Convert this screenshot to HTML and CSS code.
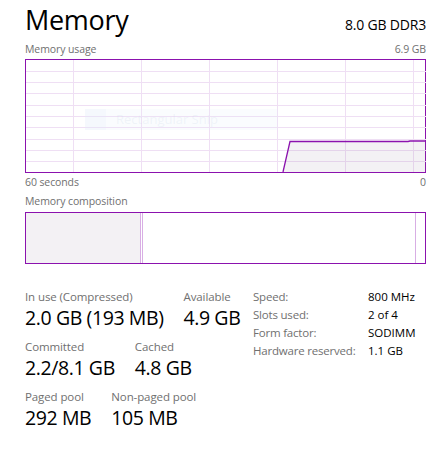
FILE: index.html
```html
<!DOCTYPE html>
<html lang="en">
<head>
  <meta charset="UTF-8">
  <title>Memory</title>
  <link rel="stylesheet" href="styles.css">
</head>
<body>
  <div class="page">
    <div class="head">
      <h1>Memory</h1>
      <div class="spec">8.0 GB DDR3</div>
    </div>
    <div class="caption"><span>Memory usage</span><span>6.9 GB</span></div>
    <div class="graph">
      <svg width="400" height="112" viewBox="0 0 400 112">
        <g stroke="#efdff4" stroke-width="1">
          <line x1="0" y1="11.5" x2="400" y2="11.5"/>
          <line x1="0" y1="22.5" x2="400" y2="22.5"/>
          <line x1="0" y1="33.5" x2="400" y2="33.5"/>
          <line x1="0" y1="45.5" x2="400" y2="45.5"/>
          <line x1="0" y1="56.5" x2="400" y2="56.5"/>
          <line x1="0" y1="67.5" x2="400" y2="67.5"/>
          <line x1="0" y1="79.5" x2="400" y2="79.5"/>
          <line x1="0" y1="90.5" x2="400" y2="90.5"/>
          <line x1="0" y1="101.5" x2="400" y2="101.5"/>
          <line x1="47.5" y1="0" x2="47.5" y2="112"/>
          <line x1="115.5" y1="0" x2="115.5" y2="112"/>
          <line x1="183.5" y1="0" x2="183.5" y2="112"/>
          <line x1="251.5" y1="0" x2="251.5" y2="112"/>
          <line x1="319.5" y1="0" x2="319.5" y2="112"/>
          <line x1="387.5" y1="0" x2="387.5" y2="112"/>
        </g>
        <path d="M257 112 L264 81.5 L400 81.5 L400 112 Z" fill="rgba(120,100,130,0.09)"/>
        <path d="M257 112 L264 81.5 L382 81.5 L384 81 L400 81" fill="none" stroke="#8b12ae" stroke-width="1.3"/>
      </svg>
      <div class="snip"><span class="snip-icon"></span>Rectangular Snip</div>
    </div>
    <div class="caption below"><span>60 seconds</span><span>0</span></div>
    <div class="caption comp-title"><span>Memory composition</span></div>
    <div class="composition">
      <div class="in-use"></div>
      <div class="modified"></div>
      <div class="standby"></div>
      <div class="free"></div>
    </div>
    <div class="details">
      <div class="stats">
        <div class="row">
          <div class="stat"><div class="label">In use (Compressed)</div><div class="value">2.0 GB (193 MB)</div></div>
          <div class="stat"><div class="label">Available</div><div class="value">4.9 GB</div></div>
        </div>
        <div class="row">
          <div class="stat"><div class="label">Committed</div><div class="value">2.2/8.1 GB</div></div>
          <div class="stat"><div class="label">Cached</div><div class="value">4.8 GB</div></div>
        </div>
        <div class="row">
          <div class="stat"><div class="label">Paged pool</div><div class="value">292 MB</div></div>
          <div class="stat"><div class="label">Non-paged pool</div><div class="value">105 MB</div></div>
        </div>
      </div>
      <div class="props">
        <div class="key">Speed:</div><div class="val">800 MHz</div>
        <div class="key">Slots used:</div><div class="val">2 of 4</div>
        <div class="key">Form factor:</div><div class="val">SODIMM</div>
        <div class="key">Hardware reserved:</div><div class="val">1.1 GB</div>
      </div>
    </div>
  </div>
</body>
</html>
```

FILE: styles.css
```css
html {
  background-color: #fff;
}

body {
  margin: 0;
  font-family: "Segoe UI", "Open Sans", sans-serif;
  color: #000;
}

.page {
  width: 401px;
  padding: 0 17px 0 25px;
}

.head {
  display: flex;
  justify-content: space-between;
  align-items: baseline;
  height: 42px;
}

.head h1 {
  margin: 0;
  font-size: 27px;
  font-weight: 400;
  line-height: 40px;
  letter-spacing: -0.3px;
}

.spec {
  font-size: 14px;
  letter-spacing: -0.2px;
}

.caption {
  display: flex;
  justify-content: space-between;
  font-size: 10.5px;
  line-height: 15px;
  color: #707070;
  letter-spacing: -0.1px;
}

.caption.below {
  margin-top: 2px;
}

.comp-title {
  margin-top: 4px;
}

.graph {
  position: relative;
  height: 112px;
  border: 1px solid #8b12ae;
  margin-top: 2px;
}

.graph svg {
  display: block;
}

.snip {
  position: absolute;
  left: 59px;
  top: 49px;
  width: 193px;
  height: 21px;
  background: rgba(230, 240, 252, 0.18);
  color: rgba(200, 212, 230, 0.22);
  font-size: 13px;
  line-height: 21px;
  display: flex;
  align-items: center;
  gap: 10px;
}

.snip-icon {
  width: 21px;
  height: 21px;
  background: rgba(225, 235, 250, 0.2);
}

.composition {
  display: flex;
  height: 50px;
  border: 1px solid #8b12ae;
  margin-top: 3px;
}

.in-use {
  width: 114px;
  background: #f3f1f4;
}

.modified {
  width: 1px;
  border-left: 1px solid #d8aee4;
  border-right: 1px solid #d8aee4;
}

.standby {
  flex: 1;
  border-right: 1px solid #d8aee4;
}

.free {
  width: 9px;
}

.details {
  display: flex;
  margin-top: 24px;
}

.stats {
  width: 228px;
}

.row {
  display: flex;
  gap: 20px;
  margin-bottom: 7px;
}

.label {
  font-size: 11.5px;
  line-height: 17px;
  color: #707070;
  letter-spacing: -0.1px;
}

.value {
  font-size: 19.5px;
  line-height: 26px;
  letter-spacing: -0.4px;
}

.props {
  display: grid;
  grid-template-columns: 115px auto;
  font-size: 11.5px;
  line-height: 18px;
  align-content: start;
}

.key {
  color: #707070;
  letter-spacing: -0.2px;
}
```
